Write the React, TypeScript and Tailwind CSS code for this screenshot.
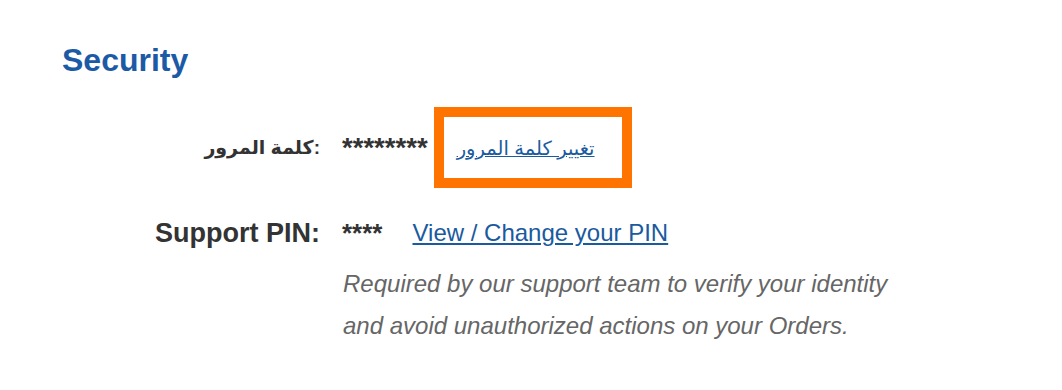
export default function App() {
  return (
    <div className="min-h-[390px] w-full bg-white px-[62px] pt-[45px] font-['Liberation_Sans',Arial,'DejaVu_Sans',sans-serif]">
      <h2 className="text-[32px] font-bold leading-[30px] text-[#1c5aa6]">Security</h2>

      {/* password row */}
      <div className="mt-[32px] flex h-[81px] items-center">
        <div className="flex w-[258px] justify-end whitespace-nowrap text-[19px] font-bold leading-[30px] text-[#333333]">
          كلمة المرور:
        </div>
        <div className="ml-[22px] flex items-center">
          <span className="text-[27.5px] font-bold leading-[30px] text-[#333333]">********</span>
          <div className="ml-[6px] flex h-[81px] w-[198px] items-center border-[10px] border-[#ff7400] pl-[13px]">
            <a href="#" className="whitespace-nowrap text-[19.5px] leading-[30px] text-[#1a5a9e] underline">
              تغيير كلمة المرور
            </a>
          </div>
        </div>
      </div>

      {/* support pin row */}
      <div className="mt-[30px] flex items-center">
        <div className="flex w-[258px] justify-end text-[27px] font-bold leading-[30px] text-[#333333]">
          Support PIN:
        </div>
        <div className="ml-[22px] flex items-center">
          <span className="text-[26px] font-bold leading-[30px] text-[#333333]">****</span>
          <a href="#" className="ml-[30px] text-[24px] leading-[30px] text-[#1a5a9e] underline">
            View / Change your PIN
          </a>
        </div>
      </div>
      <p className="mt-[15px] pl-[281px] text-[24px] italic leading-[42px] text-[#666666]">
        Required by our support team to verify your identity
        <br />
        and avoid unauthorized actions on your Orders.
      </p>
    </div>
  );
}
